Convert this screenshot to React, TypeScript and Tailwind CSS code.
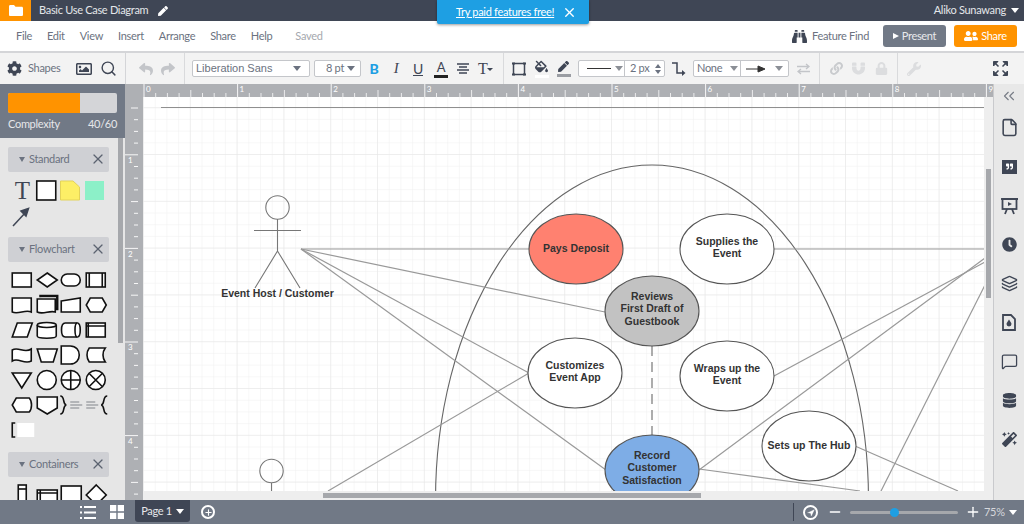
import type { ReactNode } from "react";
import {
  FaCog, FaRegImage, FaReply, FaShare, FaBinoculars, FaUserFriends, FaLink, FaMagnet, FaLock,
  FaWrench, FaClock, FaDatabase, FaMagic, FaFillDrip, FaPen, FaQuoteRight,
} from "react-icons/fa";
import { Search, X, File, Layers, MessageSquare, ChevronsLeft, Plus, Minus, Navigation } from "lucide-react";

const uiFont = "[font-family:Lato,'Open_Sans',sans-serif] tracking-[-0.3px]";

const menus = ["File", "Edit", "View", "Insert", "Arrange", "Share", "Help"];

const Caret = ({ className = "border-t-[#6b7280]" }: { className?: string }) => (
  <span className={`inline-block w-0 h-0 border-x-[4px] border-x-transparent border-t-[5px] ${className}`} />
);

const Select = ({ width, children }: { width: string; children: ReactNode }) => (
  <div className={`${width} h-[17px] flex items-center justify-between px-[3px] bg-white border border-[#c4c6ca] rounded-[2px] text-[11px] text-[#6b7280] whitespace-nowrap`}>
    {children}
  </div>
);

const PanelHeader = ({ title }: { title: string }) => (
  <div className="w-[101px] h-[25px] shrink-0 rounded-[2px] bg-[#cfd0d4] flex items-center pl-[11px] pr-[3px] pb-[1px] text-[11px] text-[#6b7280]">
    <span className="inline-block mr-[4px] w-0 h-0 border-x-[3px] border-x-transparent border-t-[5px] border-t-[#6b7280]" />
    <span className="flex-1">{title}</span>
    <X size={16} strokeWidth={1.8} className="text-[#5b6270]" />
  </div>
);

const Shape = ({ children }: { children: ReactNode }) => (
  <svg width="24.5" height="25" viewBox="0 0 24 25" fill="white" stroke="#111" strokeWidth="1.6" className="block">
    {children}
  </svg>
);

const flowShapes: ReactNode[] = [
  <rect x="2" y="5" width="19" height="14" />,
  <path d="M12 5 L22 12 L12 19 L2 12 Z" />,
  <rect x="2" y="6" width="19" height="12" rx="6" />,
  <><rect x="2" y="5" width="19" height="14" /><path d="M5 5V19M18 5V19" /></>,
  <path d="M2 5H21V19C15 16 8 22 2 19Z" />,
  <><path d="M4 3H22V16H20" strokeWidth="2.4" /><path d="M2 6H20V19C14 17 8 22 2 19Z" /></>,
  <path d="M2 8L21 5V19H2Z" />,
  <path d="M6 5H18L22 12L18 19H6L2 12Z" />,
  <path d="M7 5H22L17 19H2Z" />,
  <><path d="M2 7V18C2 21 21 21 21 18V7" /><ellipse cx="11.5" cy="7" rx="9.5" ry="2.5" /></>,
  <><path d="M6 5H18C22 5 22 19 18 19H6C1 19 1 5 6 5Z" /><path d="M18 5C15 5 15 19 18 19" /></>,
  <><rect x="2" y="5" width="19" height="14" /><path d="M4 5V19M2 8H21" /></>,
  <path d="M2 7C8 3 14 11 21 6V18C14 22 8 14 2 18Z" />,
  <path d="M2 6H22L18 19H6Z" />,
  <path d="M2 3H11C23 3 23 21 11 21H2Z" />,
  <path d="M5 5H21C18 9 18 15 21 19H5C2 15 2 9 5 5Z" />,
  <path d="M2 5H21L11.5 20Z" />,
  <circle cx="11.5" cy="12" r="9.5" />,
  <><circle cx="11.5" cy="12" r="9.5" /><path d="M11.5 2.5V21.5M2 12H21" /></>,
  <><circle cx="11.5" cy="12" r="9.5" /><path d="M5 5.5L18 18.5M18 5.5L5 18.5" /></>,
  <path d="M6 5H19C22 8 22 16 19 19H6L2 12Z" />,
  <path d="M2 4H22V15L12 21L2 15Z" />,
  <>
    <path d="M1 3C6 3 3 11 7 12C3 13 6 21 1 21" fill="none" />
    <path d="M11 9H20M11 12H23M11 15H20" stroke="#a3a5a9" />
  </>,
  <>
    <path d="M2 9H11M2 12H14M2 15H11" stroke="#a3a5a9" />
    <path d="M23 3C18 3 21 11 17 12C21 13 18 21 23 21" fill="none" />
  </>,
  <>
    <path d="M5 5H2V19H5" fill="none" />
    <rect x="7" y="5" width="17" height="14" fill="white" stroke="none" />
  </>,
];

const containerShapes: ReactNode[] = [
  <><rect x="8" y="2" width="8" height="22" /><path d="M8 6H16" /></>,
  <><rect x="2" y="7" width="20" height="14" /><path d="M5 7V21M2 10H22" /></>,
  <rect x="2" y="3" width="20" height="18" />,
  <path d="M12 2L22 12L12 22L2 12Z" />,
];

const TopBar = () => (
  <div className="h-[21px] bg-[#3f4655] flex items-center text-[11px] text-[#e4e6ea]">
    <div className="w-[31px] h-full bg-[#ff9300] flex items-center justify-center">
      <svg width="14" height="11" viewBox="0 0 14 11" fill="white"><path d="M0 1.5C0 .7.5 0 1.3 0H5l1.5 1.7h6.2c.7 0 1.3.6 1.3 1.3v6.7c0 .7-.6 1.3-1.3 1.3H1.3C.5 11 0 10.400 0 9.700Z" /></svg>
    </div>
    <span className="ml-2">Basic Use Case Diagram</span>
    <FaPen size={10} className="ml-[10px] text-white" />
    <span className="ml-auto">Aliko Sunawang</span>
    <Caret className="border-t-white ml-[5px] mr-[5px]" />
  </div>
);

const MenuBar = () => (
  <div className="h-[32px] bg-white border-b-2 border-[#d4d5d8] flex items-center text-[11px] text-[#6b7280]">
    <div className="flex ml-[16px] gap-[15px]">
      {menus.map((m) => <span key={m}>{m}</span>)}
    </div>
    <span className="ml-[23px] text-[#a5a8ae]">Saved</span>
    <FaBinoculars size={15} className="ml-auto text-[#3f4655]" />
    <span className="ml-[5px] text-[#6b7280]">Feature Find</span>
    <div className="ml-[14px] w-[63px] h-[22px] rounded-[3px] bg-[#717986] text-[#e8e9ec] flex items-center justify-center gap-[3px]">
      <span className="w-0 h-0 border-y-[3.5px] border-y-transparent border-l-[6px] border-l-white" />
      Present
    </div>
    <div className="ml-[8px] mr-[7px] w-[63px] h-[22px] rounded-[3px] bg-[#ff9300] text-white flex items-center justify-center gap-[3px]">
      <FaUserFriends size={14} />
      Share
    </div>
  </div>
);

const Toolbar = () => (
  <div className="h-[31px] bg-[#f3f3f3] flex items-center text-[#3f4655]">
    <div className="w-[126px] h-full shrink-0 border-r border-[#d4d5d8] flex items-center">
      <FaCog size={15} className="ml-[7px] shrink-0" />
      <span className="ml-[6px] w-[42px] text-[11px] text-[#6b7280]">Shapes</span>
      <FaRegImage size={16} className="ml-[6px] shrink-0" />
      <Search size={17} strokeWidth={2} className="ml-[8px] shrink-0" />
    </div>
    <div className="w-[59px] h-full shrink-0 border-r border-[#d9dadc] flex items-center text-[#c3c5c9]">
      <FaReply size={14} className="ml-[13px]" />
      <FaShare size={14} className="ml-[8px]" />
    </div>
    <div className="ml-[7px]"><Select width="w-[118px]"><span className="[font-family:'Liberation_Sans',sans-serif] tracking-normal text-[11px]">Liberation Sans</span><Caret className="border-t-[#6b7280] mr-[5px]" /></Select></div>
    <div className="ml-[4px]"><Select width="w-[47px]"><span className="ml-[8px]">8 pt</span><Caret className="border-t-[#6b7280] mr-[2px]" /></Select></div>
    <span className="ml-[6px] w-[14px] text-center text-[14px] font-black text-[#1e9fe3]">B</span>
    <span className="ml-[9px] w-[12px] text-center text-[15px] italic [font-family:'Liberation_Serif',serif]">I</span>
    <span className="ml-[9px] w-[14px] text-center text-[14px] underline">U</span>
    <span className="ml-[9px] w-[14px] h-[18px] flex flex-col items-center text-[13px] leading-[15px]">A<span className="w-[14px] h-[3px] bg-[#222]" /></span>
    <svg className="ml-[8px]" width="14" height="14" viewBox="0 0 14 14" stroke="#3f4655" strokeWidth="1.3"><path d="M1 2H13M3 5H11M1 8H13M3 11H11" /></svg>
    <span className="ml-[8px] w-[16px] flex items-start text-[16px] leading-none [font-family:'Liberation_Serif',serif]">T<span className="mt-[7px] w-0 h-0 border-x-[3px] border-x-transparent border-t-[3px] border-t-[#3f4655]" /></span>
    <div className="ml-[9px] h-full w-px bg-[#d9dadc]" />
    <svg className="ml-[8px]" width="14" height="14" viewBox="0 0 14 14" fill="none" stroke="#3f4655"><rect x="1.500" y="1.500" width="11" height="11" strokeWidth="1.500" /><path d="M0 1.500H3M11 1.500H14M0 12.500H3M11 12.500H14" strokeWidth="2" /></svg>
    <div className="ml-[8px] w-[15px] flex flex-col items-center">
      <FaFillDrip size={13} />
      <span className="mt-[2px] w-[14px] h-[3px] bg-white" />
    </div>
    <div className="ml-[7px] w-[15px] flex flex-col items-center">
      <FaPen size={11} />
      <span className="mt-[2px] w-[14px] h-[3px] bg-[#9a9da3]" />
    </div>
    <div className="ml-[7px] w-[87px] h-[17px] flex items-center bg-white border border-[#c4c6ca] rounded-[2px] text-[11px] text-[#6b7280] whitespace-nowrap">
      <div className="w-[46px] h-full flex items-center border-r border-[#c4c6ca]">
        <span className="ml-[8px] w-[24px] h-px bg-[#333]" />
        <Caret className="ml-[4px] border-t-[#8b8f96]" />
      </div>
      <span className="ml-[5px]">2 px</span>
      <span className="ml-[6px] flex flex-col gap-[2px]">
        <span className="w-0 h-0 border-x-[3px] border-x-transparent border-b-[4px] border-b-[#6b7280]" />
        <span className="w-0 h-0 border-x-[3px] border-x-transparent border-t-[4px] border-t-[#6b7280]" />
      </span>
    </div>
    <svg className="ml-[6px]" width="16" height="16" viewBox="0 0 16 16" fill="none" stroke="#3f4655" strokeWidth="1.500"><path d="M1 2H6V12H12" /><path d="M11 9L14.500 12L11 15" fill="#3f4655" stroke="none" /></svg>
    <div className="ml-[6px] w-[96px] h-[17px] flex items-center bg-white border border-[#c4c6ca] rounded-[2px] text-[11px] text-[#6b7280]">
      <div className="w-[47px] h-full flex items-center border-r border-[#c4c6ca]">
        <span className="ml-[3px]">None</span>
        <Caret className="ml-[8px] border-t-[#8b8f96]" />
      </div>
      <svg className="ml-[5px]" width="20" height="8" viewBox="0 0 20 8" fill="#333" stroke="#333"><path d="M0 4H14" /><path d="M12 1L19 4L12 7Z" /></svg>
      <Caret className="ml-[9px] border-t-[#8b8f96]" />
    </div>
    <svg className="ml-[8px]" width="13" height="12" viewBox="0 0 13 12" fill="none" stroke="#c3c5c9" strokeWidth="1.300"><path d="M0 3.500H12M9 1L12 3.500L9 6M13 8.500H1M4 6L1 8.500L4 11" /></svg>
    <div className="ml-[9px] h-full w-px bg-[#d9dadc]" />
    <div className="w-[78px] h-full shrink-0 border-r border-[#d9dadc] flex items-center text-[#dcdddf]">
      <FaLink size={13} className="ml-[10px] text-[#c9cbce]" />
      <FaMagnet size={13} className="ml-[9px]" />
      <FaLock size={13} className="ml-[10px]" />
    </div>
    <FaWrench size={14} className="ml-[9px] text-[#dcdddf]" />
    <svg className="ml-auto mr-[16px]" width="15" height="15" viewBox="0 0 15 15" fill="#3f4655" stroke="#3f4655">
      <path d="M0.500 0.500H5L0.500 5Z M14.500 0.500H10L14.500 5Z M0.500 14.500H5L0.500 10Z M14.500 14.500H10L14.500 10Z" />
      <path d="M2 2L5.500 5.500M13 2L9.500 5.500M2 13L5.500 9.500M13 13L9.500 9.500" strokeWidth="1.500" />
    </svg>
  </div>
);

const LeftPanel = () => (
  <aside className="relative w-[125px] shrink-0 h-full overflow-hidden bg-[#e6e6e6]">
    <div className="h-[54px] bg-[#717986] px-[8px] pt-[9px] text-[11px] text-[#e6e7ea]">
      <div className="h-[20px] flex rounded-[2px] overflow-hidden bg-[#d4d5d8]">
        <div className="w-[72px] bg-[#ff9300]" />
      </div>
      <div className="mt-[3px] flex justify-between"><span>Complexity</span><span>40/60</span></div>
    </div>
    <div className="pl-[8px] pt-[9px] flex flex-col">
      <PanelHeader title="Standard" />
      <div className="mt-[6px] ml-[2px] h-[50px] grid grid-cols-[24.500px_24.500px_24.500px_24.500px] grid-rows-[25px_25px] items-center">
        <span className="text-center text-[25px] leading-[25px] text-[#3f4655] [font-family:'Liberation_Serif',serif]">T</span>
        <Shape><rect x="1.500" y="3" width="19" height="19" /></Shape>
        <svg width="24" height="25" viewBox="0 0 24 25" fill="#fdef66" stroke="#e3d35a"><path d="M1.500 3H14L20.500 9V22H1.500Z" /></svg>
        <div className="ml-[1px] w-[19px] h-[19px] bg-[#8cf0c8]" />
        <svg width="24" height="25" viewBox="0 0 24 25" fill="#3f4655" stroke="#3f4655" strokeWidth="1.500"><path d="M3 23L16 9" /><path d="M11 8L18.500 5.500L16 13Z" /></svg>
      </div>
      <div className="mt-[9px]"><PanelHeader title="Flowchart" /></div>
      <div className="mt-[6px] ml-[2px] grid grid-cols-[24.500px_24.500px_24.500px_24.500px] auto-rows-[25px] h-[175px]">
        {flowShapes.map((s, i) => <Shape key={i}>{s}</Shape>)}
      </div>
      <div className="mt-[9px]"><PanelHeader title="Containers" /></div>
      <div className="mt-[6px] ml-[2px] grid grid-cols-[24.500px_24.500px_24.500px_24.500px]">
        {containerShapes.map((s, i) => <Shape key={i}>{s}</Shape>)}
      </div>
    </div>
    <div className="absolute left-[118px] top-[54px] w-[5px] h-[205px] bg-[#a6a8ac]" />
  </aside>
);

const HRuler = () => (
  <svg width="868" height="13" className="block bg-[#aeb0b4] shrink-0">
    {Array.from({ length: 80 }, (_, i) => {
      const x = 19 + (i * 93.6) / 8;
      const major = i % 8 === 0;
      const mid = i % 4 === 0;
      return <line key={i} x1={x} x2={x} y1={major ? 0 : mid ? 6 : 9} y2={13} stroke="white" strokeWidth="0.900" opacity={major ? 1 : 0.85} />;
    })}
    {Array.from({ length: 10 }, (_, i) => (
      <text key={i} x={21 + i * 93.6} y={8} fontSize="8" fill="white" fontFamily="Lato, sans-serif">{i}</text>
    ))}
  </svg>
);

const VRuler = () => (
  <svg width="18" height="403" className="block bg-[#aeb0b4] shrink-0">
    {Array.from({ length: 36 }, (_, i) => {
      const y = i * 11.7 + 11;
      const major = (i - 4) % 8 === 0;
      const mid = i % 4 === 0;
      return <line key={i} x1={major ? 0 : mid ? 6 : 9} x2={13} y1={y} y2={y} stroke="white" strokeWidth="0.900" />;
    })}
    {[1, 2, 3, 4].map((n, i) => (
      <text key={n} x={3} y={66 + i * 93.6} fontSize="8" fill="white" fontFamily="Lato, sans-serif">{n}</text>
    ))}
  </svg>
);

type Oval = { cx: number; cy: number; fill: string; lines: string[] };

const ovals: Oval[] = [
  { cx: 576, cy: 249, fill: "#ff8170", lines: ["Pays Deposit"] },
  { cx: 727, cy: 249, fill: "white", lines: ["Supplies the", "Event"] },
  { cx: 652, cy: 311, fill: "#c2c2c2", lines: ["Reviews", "First Draft of", "Guestbook"] },
  { cx: 575, cy: 373, fill: "white", lines: ["Customizes", "Event App"] },
  { cx: 727, cy: 376, fill: "white", lines: ["Wraps up the", "Event"] },
  { cx: 652, cy: 470, fill: "#7eade6", lines: ["Record", "Customer", "Satisfaction"] },
  { cx: 809, cy: 446, fill: "white", lines: ["Sets up The Hub"] },
];

const lines: [number, number, number, number][] = [
  [301, 249, 529, 249],
  [301, 249, 605, 312],
  [301, 249, 529, 373],
  [301, 249, 606, 470],
  [774, 249, 985, 249],
  [774, 376, 985, 262],
  [699, 470, 985, 258],
  [699, 469, 860, 491],
  [855, 446, 958, 491],
  [529, 373, 328, 491],
  [985, 285, 881, 491],
];

const Diagram = () => (
  <svg width="850" height="403" viewBox="143 97 850 403" className="block absolute inset-0 tracking-normal">
    <defs>
      <pattern id="minor" x="144" y="155" width="11.700" height="11.700" patternUnits="userSpaceOnUse">
        <path d="M11.700 0V11.700H0" fill="none" stroke="#f0f0f0" strokeWidth="1" />
      </pattern>
      <pattern id="major" x="144" y="155" width="46.800" height="46.800" patternUnits="userSpaceOnUse">
        <path d="M46.800 0V46.800H0" fill="none" stroke="#e6e6e6" strokeWidth="1" />
      </pattern>
    </defs>
    <rect x="143" y="97" width="850" height="403" fill="white" />
    <rect x="143" y="97" width="850" height="403" fill="url(#minor)" />
    <rect x="143" y="97" width="850" height="403" fill="url(#major)" />
    <line x1="161" x2="985" y1="107.500" y2="107.500" stroke="#8f8f8f" strokeWidth="1.200" />
    <g stroke="#777" strokeWidth="1.100" fill="none">
      <circle cx="277.500" cy="207.500" r="11.700" />
      <path d="M277.500 219V251M254 230.500H301M277.500 251L255 288M277.500 251L300 288" />
      <circle cx="271.500" cy="471" r="11.700" />
      <path d="M271.500 483V491" />
    </g>
    <text x="277.500" y="297" textAnchor="middle" fontSize="10.500" fontWeight="700" fill="#333" fontFamily="'Liberation Sans', sans-serif">Event Host / Customer</text>
    <ellipse cx="652" cy="500" rx="216.500" ry="335" fill="none" stroke="#666" strokeWidth="1.100" />
    {lines.map(([x1, y1, x2, y2], i) => (
      <line key={i} x1={x1} y1={y1} x2={x2} y2={y2} stroke="#999" strokeWidth="1.200" />
    ))}
    <line x1="652" x2="652" y1="346" y2="436" stroke="#777" strokeWidth="1.200" strokeDasharray="10 6" />
    {ovals.map((o) => {
      const top = o.cy + 4 - o.lines.length - ((o.lines.length - 1) * 12.500) / 2;
      return (
        <g key={o.lines[0]}>
          <ellipse cx={o.cx} cy={o.cy} rx={47} ry={35} fill={o.fill} stroke="#555" strokeWidth="1.100" />
          {o.lines.map((l, i) => (
            <text key={l} x={o.cx} y={top + i * 12.500} textAnchor="middle" fontSize="10.500" fontWeight="700" fill="#333" fontFamily="'Liberation Sans', sans-serif">{l}</text>
          ))}
        </g>
      );
    })}
  </svg>
);

const Canvas = () => (
  <div className="flex-1 min-w-0 h-full flex flex-col">
    <HRuler />
    <div className="flex-1 min-h-0 flex">
      <VRuler />
      <div className="relative flex-1 min-w-0">
        <Diagram />
        <div className="absolute left-0 right-0 bottom-0 h-[9px] bg-[#eeeeee]">
          <div className="absolute left-[180px] top-[2px] w-[378px] h-[5px] bg-[#a6a8ac]" />
        </div>
        <div className="absolute top-0 right-0 bottom-0 w-[9px] bg-[#eeeeee]">
          <div className="absolute left-[2px] top-[72px] w-[5px] h-[129px] bg-[#a6a8ac]" />
        </div>
      </div>
    </div>
  </div>
);

const railIcons: ReactNode[] = [
  <File size={19} strokeWidth={2} />,
  <div className="w-[15px] h-[14px] bg-[#3f4655] flex items-center justify-center text-white"><FaQuoteRight size={7} /></div>,
  <svg width="17" height="18" viewBox="0 0 17 18" fill="none" stroke="#3f4655" strokeWidth="1.800"><path d="M0 2H17" /><rect x="1.500" y="2" width="14" height="10" /><path d="M7 5L11 7L7 9Z" fill="#3f4655" stroke="none" /><path d="M6 12L4 17M11 12L13 17" /></svg>,
  <FaClock size={15} />,
  <Layers size={17} strokeWidth={2} />,
  <svg width="14" height="17" viewBox="0 0 14 17" fill="none" stroke="#3f4655" strokeWidth="1.800"><path d="M1 1H9L13 5V16H1Z" /><path d="M7 5.500C8 7.500 9.500 8.500 9.500 10A2.500 2.500 0 0 1 4.500 10C4.500 8.500 6 7.500 7 5.500Z" fill="#3f4655" stroke="none" /></svg>,
  <MessageSquare size={17} strokeWidth={1.800} />,
  <FaDatabase size={15} />,
  <FaMagic size={15} />,
];

const RightPanel = () => (
  <aside className="w-[31px] shrink-0 h-full bg-[#e8e8e8] border-l border-[#c9cacd] flex flex-col items-center text-[#3f4655]">
    <div className="h-[24px] flex items-center">
      <ChevronsLeft size={18} strokeWidth={1.500} className="text-[#777c86]" />
    </div>
    {railIcons.map((icon, i) => (
      <div key={i} className="h-[39px] shrink-0 flex items-center justify-center">{icon}</div>
    ))}
  </aside>
);

const BottomBar = () => (
  <div className="h-[24px] bg-[#717986] flex items-start text-[11px] text-[#e6e7ea]">
    <svg className="ml-[80px] mt-[6px]" width="16" height="13" viewBox="0 0 16 13" fill="white"><path d="M0 0h2v2H0zM4 0h12v2H4zM0 5.500h2v2H0zM4 5.500h12v2H4zM0 11h2v2H0zM4 11h12v2H4z" /></svg>
    <svg className="ml-[14px] mt-[5px]" width="14" height="14" viewBox="0 0 14 14" fill="white"><path d="M0 0h6.300v6.300H0zM7.700 0H14v6.300H7.700zM0 7.700h6.300V14H0zM7.700 7.700H14V14H7.700z" /></svg>
    <div className="ml-[11px] w-[55px] h-[22px] rounded-b-[3px] bg-[#3f4655] flex items-center justify-center gap-[4px]">
      Page 1
      <Caret className="border-t-white" />
    </div>
    <div className="ml-[11px] mt-[5px] w-[14px] h-[14px] rounded-full border-2 border-white flex items-center justify-center">
      <Plus size={9} strokeWidth={3} className="text-white" />
    </div>
    <div className="ml-[578px] mt-[3px] h-[18px] w-px bg-[#3f4655]" />
    <div className="ml-[9px] mt-[5px] w-[15px] h-[15px] rounded-full border-2 border-white flex items-center justify-center">
      <Navigation size={8} fill="white" strokeWidth={1} className="text-white" />
    </div>
    <Minus size={16} strokeWidth={2} className="ml-[9px] mt-[4px] text-white" />
    <div className="ml-[7px] mt-[11px] relative w-[108px] h-[3px] rounded-full bg-[#a6a8ac]">
      <div className="absolute left-[40px] top-[-3px] w-[9px] h-[9px] rounded-full bg-[#1e9fe3]" />
    </div>
    <Plus size={16} strokeWidth={2} className="ml-[7px] mt-[4px] text-white" />
    <span className="ml-[3px] mt-[4px] text-[#d6d8dc]">75%</span>
    <Caret className="mt-[10px] ml-[4px] border-t-white" />
  </div>
);

export default function App() {
  return (
    <div className={`relative w-[1024px] h-[524px] overflow-hidden bg-white flex flex-col ${uiFont}`}>
      <TopBar />
      <MenuBar />
      <Toolbar />
      <main className="flex-1 min-h-0 flex">
        <LeftPanel />
        <Canvas />
        <RightPanel />
      </main>
      <BottomBar />
      <div className="absolute left-[437px] top-0 w-[152px] h-[24px] rounded-b-[2px] bg-[#1e9fe3] shadow-[0_1px_3px_rgba(0,0,0,0.4)] flex items-center text-[11px] text-white whitespace-nowrap">
        <span className="ml-[19px] underline">Try paid features free!</span>
        <X size={15} strokeWidth={2.200} className="ml-auto mr-[12px]" />
      </div>
    </div>
  );
}
